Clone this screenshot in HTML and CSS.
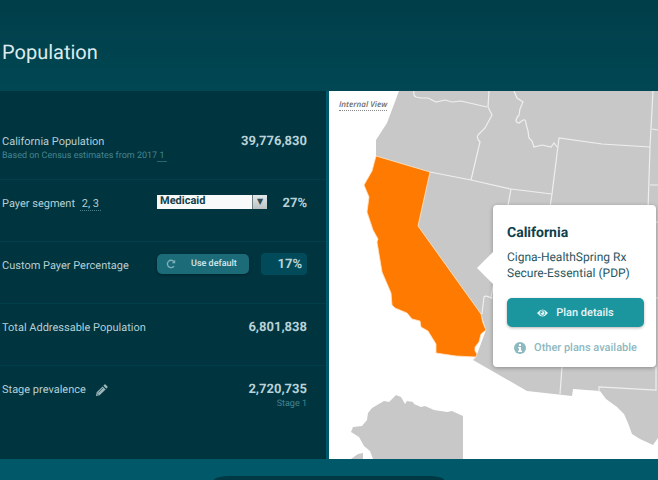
FILE: index.html
```html
<!DOCTYPE html>
<html lang="en">
<head>
  <meta charset="UTF-8" />
  <meta name="viewport" content="width=device-width, initial-scale=1.0"/>
  <title>Population</title>
  <link rel="stylesheet" href="styles.css">
</head>
<body>

  <header class="header">
    <h1>Population</h1>
  </header>

  <main class="content">
    <section class="stats">
      <div class="row">
        <div class="label">
          California Population
          <small>Based on Census estimates from 2017<a href="#ref1">&nbsp;1&nbsp;</a></small>
        </div>
        <div class="value">39,776,830</div>
      </div>

      <div class="row">
        <label class="label" for="segment">Payer segment <a class="refs" href="#ref2">2, 3</a></label>
        <div class="control select">
          <select id="segment">
            <option>Medicaid</option>
            <option>Medicare</option>
            <option>Commercial</option>
          </select>
        </div>
        <div class="value short">27%</div>
      </div>

      <div class="row">
        <label class="label" for="percentage">Custom Payer Percentage</label>
        <button class="control default-btn" type="button">
          <svg viewBox="0 0 12 12" width="10" height="10" aria-hidden="true">
            <path d="M9.6 8.6A4.4 4.4 0 1 1 9.4 3" fill="none" stroke="currentColor" stroke-width="1.6"/>
            <path d="M11 .8V5H6.8z" fill="currentColor"/>
          </svg>
          <span>Use default</span>
        </button>
        <input class="value short" id="percentage" type="text" value="17%">
      </div>

      <div class="row">
        <div class="label">Total Addressable Population</div>
        <div class="value">6,801,838</div>
      </div>

      <div class="row">
        <div class="label">
          Stage prevalence
          <button class="edit" type="button" aria-label="Edit stage">
            <svg viewBox="0 0 14 14" width="13" height="13">
              <path d="M1 13l.8-4L8.2 2.600l3.200 3.200L5 12.200zM9 1.800l1.200-1.200q.6-.5 1.200 0l2 2q.5.6 0 1.200L12.200 5z" fill="currentColor"/>
              <path d="M3.500 9.300L8.600 4.200M2.200 10.300l1.500 1.500" stroke="#00343f" stroke-width=".7"/>
            </svg>
          </button>
        </div>
        <div class="value">
          2,720,735
          <small>Stage 1</small>
        </div>
      </div>
    </section>

    <section class="map">
      <svg class="states" viewBox="329 91 329 368" aria-label="Map of the United States">
        <g class="land">
          <path d="M399 91L387 123L376 140V156L430 172L418 226L481 314L486 330L476 357L473 360L527 391L572 396L573 389L600 391L606 399L617 407L624 414L628 423L632 434L640 439L653 445L658 438V91z"/>
          <path d="M351 432L353 427L362 426L367 420L368 413L372 408L384 401L389 402L396 395L401 397L405 404L407 401L413 402L414 404L421 407L425 406L434 410L447 412L452 411L463 416V459H373L370 451L364 446L359 437z"/>
          <path d="M351 459L358 454L363 453V459z"/>
        </g>
        <g class="borders">
          <path d="M414 91Q413 96 416 97L421 98L428 98L436 102L445 100L452 102L461 101L487 107"/>
          <path d="M489 91L488 107L492 115L485 128L478 135Q476 138 480 142L471 180"/>
          <path d="M430 172L471 180L511 189L552 194M511 189L491 298Q486 295 484 297L482 314"/>
          <path d="M514 91L517 98L523 102L520 109L519 115Q513 122 519 123L523 120Q526 119 526 124L528 131L529 138L532 141L534 147L542 145L551 147L554 143L557 147"/>
          <path d="M650 147L602 144L559 138L552 194L548 220M653 91L650 147L648 210M652 129L658 130M650 185H658"/>
          <path d="M491 298L658 298M567 298L560 394M599 392V387L656 390V367M655 222H658"/>
        </g>
        <path class="selected" d="M376 156L430 172L418 226L481 314L483 323L486 330L481 334L479 342L475 347L475 351L477 354L476 357L456 356L436 353V344L428 331L421 327L420 321L412 319L407 313L395 308L392 305L391 293L382 272L377 242L378 239L373 230L367 212L369 197L364 185L372 171z"/>
      </svg>

      <a class="view" href="#internal">Internal View</a>

      <div class="popup">
        <h2>California</h2>
        <p>Cigna-HealthSpring Rx Secure-Essential (PDP)</p>
        <button class="details" type="button">
          <svg viewBox="0 0 14 10" width="11" height="8" aria-hidden="true">
            <path d="M0 5Q7-4 14 5Q7 14 0 5z" fill="currentColor"/>
            <circle cx="7" cy="5" r="3" fill="none" stroke="#1b959e"/>
            <circle cx="6" cy="4" r="1" fill="#1b959e"/>
          </svg>
          Plan details
        </button>
        <a class="other" href="#plans">
          <svg viewBox="0 0 12 12" width="12" height="12" aria-hidden="true">
            <circle cx="6" cy="6" r="6" fill="currentColor"/>
            <path d="M5 2h2v2H5zM4.200 5H7v3.600h1V10H4V8.600h1V6.200h-.8z" fill="#fff"/>
          </svg>
          Other plans available
        </a>
      </div>
    </section>
  </main>

  <footer class="footer">
    <div class="drawer"></div>
  </footer>

</body>
</html>
```

FILE: styles.css
```css
* {
  box-sizing: border-box;
}

body {
  margin: 0;
  min-height: 100vh;
  display: flex;
  flex-direction: column;
  font-family: Roboto, sans-serif;
  font-size: 11px;
  line-height: 16px;
  text-rendering: geometricPrecision;
  background-color: #005868;
  color: #b5cfd3;
}

button,
input,
select {
  font-family: inherit;
  text-rendering: inherit;
  border: none;
  margin: 0;
  padding: 0;
}

a {
  color: inherit;
  text-decoration: none;
}

.header {
  padding: 40px 2px 27px;
  background: linear-gradient(#003e49, #004753);
}

h1 {
  margin: 0;
  font-size: 20px;
  line-height: 24px;
  font-weight: 400;
  color: #dcebed;
}

.content {
  display: grid;
  grid-template-columns: 326fr 329fr;
  gap: 3px;
  background-color: #00586a;
}

/* left column */
.stats {
  padding-top: 27px;
  background-color: #00343f;
}

.row {
  display: flex;
  align-items: flex-start;
  height: 62px;
  padding: 16px 19px 0 2px;
  border-bottom: 1px solid #003f4a;
}

.row:last-child {
  border-bottom: none;
}

.label {
  flex: 1;
  white-space: nowrap;
}

.label small,
.value small {
  display: block;
  font-size: 9px;
  line-height: 13px;
  font-weight: 400;
  color: #44858f;
}

.label small a {
  border-bottom: 1px solid #2a6670;
}

.refs {
  margin-left: 2px;
  padding: 0 2px;
  border-bottom: 1px dotted #4f8089;
}

.value {
  font-size: 13px;
  font-weight: 700;
  text-align: right;
  color: #b9d2d6;
}

.short {
  width: 46px;
  margin-left: 12px;
}

div.short {
  width: 40px;
  margin-left: 0;
}

input.value {
  height: 22px;
  margin-top: -5px;
  padding-right: 5px;
  border-radius: 4px;
  background-color: #004a59;
}

.select {
  position: relative;
  display: flex;
  width: 110px;
  margin-top: -1px;
  margin-right: 0;
}

.select select {
  appearance: none;
  width: 100%;
  height: 14px;
  padding: 0 16px 2px 3px;
  border-radius: 0;
  font-size: 11px;
  line-height: 12px;
  font-weight: 700;
  background-color: #f8fafa;
  color: #12404a;
}

.select::after {
  content: "▼";
  position: absolute;
  top: 0;
  right: 0;
  width: 14px;
  height: 14px;
  border-left: 1px solid #6b8085;
  font-family: "DejaVu Sans", sans-serif;
  font-size: 8px;
  line-height: 13px;
  text-align: center;
  background: linear-gradient(#e3e8e9, #b9c2c4);
  color: #344c52;
  pointer-events: none;
}

.default-btn {
  display: flex;
  align-items: center;
  width: 92px;
  height: 20px;
  margin-top: -4px;
  padding-left: 9px;
  border-radius: 5px;
  font-size: 9px;
  font-weight: 500;
  background-color: #1c6b78;
  color: #d4e8eb;
  box-shadow: 0 1px 3px rgba(0, 0, 0, 0.3);
}

.default-btn svg {
  color: #7eb3bb;
}

.default-btn span {
  margin-left: 15px;
}

.edit {
  height: 13px;
  margin-left: 6px;
  vertical-align: middle;
  background: none;
  color: #9bb5ba;
}

.edit svg {
  display: block;
}

/* map */
.map {
  position: relative;
  background-color: #fff;
}

.states {
  display: block;
  width: 100%;
}

.land {
  fill: #c8c8c8;
}

.borders {
  fill: none;
  stroke: #efefef;
  stroke-width: 1.2;
}

.selected {
  fill: #ff7a00;
  stroke: #ffe2c4;
  stroke-width: 0.8;
}

.view {
  position: absolute;
  top: 8px;
  left: 10px;
  border-bottom: 1px dotted #8a8a8a;
  font-family: "Open Sans", sans-serif;
  font-size: 8px;
  line-height: 11px;
  font-weight: 600;
  font-style: italic;
  color: #6d6d6d;
}

.popup {
  position: absolute;
  top: 114px;
  right: 2px;
  width: 163px;
  padding: 19px 12px 11px 14px;
  border-radius: 4px;
  background-color: #fff;
  color: #2a5660;
  box-shadow: 0 1px 4px rgba(0, 0, 0, 0.3);
}

.popup::before {
  content: "";
  position: absolute;
  top: 47px;
  right: 100%;
  border: solid transparent;
  border-width: 16px 16px 16px 0;
  border-right-color: #fff;
}

.popup h2 {
  margin: 0 0 7px;
  font-size: 14px;
  line-height: 18px;
  font-weight: 700;
  color: #0d404b;
}

.popup p {
  margin: 0 0 17px;
  font-size: 12px;
  line-height: 16px;
}

.details,
.other {
  display: flex;
  align-items: center;
  justify-content: center;
  gap: 8px;
}

.details {
  width: 100%;
  height: 29px;
  border-radius: 5px;
  font-size: 11px;
  font-weight: 500;
  background-color: #1b959e;
  color: #e6f6f7;
  box-shadow: 0 1px 3px rgba(0, 0, 0, 0.3);
}

.other {
  margin-top: 13px;
  font-size: 11px;
  font-weight: 500;
  white-space: nowrap;
  color: #8db9c1;
}

/* bottom drawer handle */
.footer {
  flex: 1;
  display: flex;
  align-items: flex-end;
  justify-content: center;
}

.drawer {
  width: 35%;
  height: 4px;
  border-radius: 16px 16px 0 0 / 4px 4px 0 0;
  background-color: #003943;
}
```
